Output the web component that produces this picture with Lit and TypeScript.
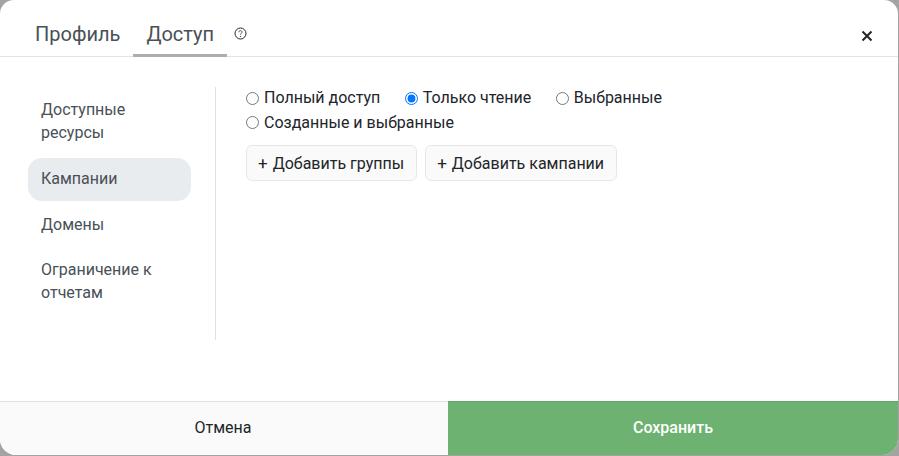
import { LitElement, html, css } from "lit";
import { customElement } from "lit/decorators.js";

@customElement("app-root")
export class AppRoot extends LitElement {
  static styles = css`
    :host { display: block; width: 899px; height: 456px; background: #a3a3a3; font-family: Roboto, sans-serif; color: #212529; overflow: hidden; }
    * { box-sizing: border-box; }
    .dialog { width: 898px; height: 455px; background: #fff; border-radius: 14px 14px 16px 16px; overflow: hidden; display: flex; flex-direction: column; }
    .head { height: 57px; flex: none; display: flex; align-items: flex-end; border-bottom: 1px solid #e2e3e4; padding: 0 25px 0 22px; }
    .tab { height: 35px; margin-bottom: -1px; padding: 0 13px; font-size: 20px; line-height: 24px; color: #495057; border-bottom: 3px solid transparent; }
    .tab.on { border-bottom-color: #adadb0; }
    .help { width: 13px; height: 13px; margin: 0 0 16px 7px; display: block; }
    .close { margin-left: auto; margin-bottom: 14px; width: 12px; height: 12px; display: block; }
    .body { flex: 1; display: flex; padding: 30px 0 0 28px; min-height: 0; }
    .side { width: 188px; height: 253px; flex: none; border-right: 1px solid #dee2e6; padding-right: 24px; font-size: 16px; line-height: 23px; color: #495057; }
    .item { padding: 0 13px; border-radius: 14px; }
    .item.first { padding-top: 11px; height: 71px; }
    .item.on { background: #e9ecef; height: 43px; padding-top: 9px; }
    .item.dom { height: 45px; padding-top: 12px; }
    .item.rep { padding-top: 12px; }
    .content { flex: 1; padding-left: 30px; }
    .radios { display: flex; flex-wrap: wrap; width: 460px; font-size: 16px; line-height: 24px; margin-top: -1px; }
    label { display: flex; align-items: center; height: 24.5px; margin-right: 24.5px; color: #212529; }
    input { width: 13px; height: 13px; margin: 0 5px 0 0; flex: none; }
    .btns { display: flex; gap: 8px; margin-top: 10px; }
    .btn { height: 36px; padding: 0 12px 0 11px; border: 1px solid #e6e7e8; border-radius: 6px; background: #fafafa; font-size: 16px; line-height: 34px; color: #212529; white-space: nowrap; }
    .plus { margin-right: 1px; font-size: 17px; }
    .foot { height: 54px; flex: none; display: flex; font-size: 16px; }
    .cancel { width: 448px; background: #fafafa; border-top: 1px solid #dfe0e1; display: flex; align-items: center; justify-content: center; color: #212529; padding: 0 2px 2px 0; }
    .save { flex: 1; background: #6eb272; border-top: 1px solid #65a469; display: flex; align-items: center; justify-content: center; color: #fff; font-weight: 500; padding-bottom: 2px; }
  `;

  render() {
    return html`
      <div class="dialog">
        <div class="head">
          <div class="tab">Профиль</div>
          <div class="tab on">Доступ</div>
          <svg class="help" viewBox="0 0 13 13" fill="none">
            <circle cx="6.5" cy="6.5" r="5.5" stroke="#212529" stroke-width="1"/>
            <path d="M4.9 5.2c0-1 .7-1.6 1.6-1.6s1.6.6 1.6 1.5c0 1.1-1.6 1.2-1.6 2.5" stroke="#495057" stroke-width="1"/>
            <circle cx="6.5" cy="9.4" r=".7" fill="#495057"/>
          </svg>
          <svg class="close" viewBox="0 0 12 12" fill="none">
            <path d="M1.5 1.5l9 9M10.5 1.5l-9 9" stroke="#212529" stroke-width="2"/>
          </svg>
        </div>
        <div class="body">
          <div class="side">
            <div class="item first">Доступные ресурсы</div>
            <div class="item on">Кампании</div>
            <div class="item dom">Домены</div>
            <div class="item rep">Ограничение к отчетам</div>
          </div>
          <div class="content">
            <div class="radios">
              <label><input type="radio" name="a" />Полный доступ</label>
              <label><input type="radio" name="a" checked />Только чтение</label>
              <label><input type="radio" name="a" />Выбранные</label>
              <label><input type="radio" name="a" />Созданные и выбранные</label>
            </div>
            <div class="btns">
              <div class="btn"><span class="plus">+</span> Добавить группы</div>
              <div class="btn"><span class="plus">+</span> Добавить кампании</div>
            </div>
          </div>
        </div>
        <div class="foot">
          <div class="cancel">Отмена</div>
          <div class="save">Сохранить</div>
        </div>
      </div>
    `;
  }
}
